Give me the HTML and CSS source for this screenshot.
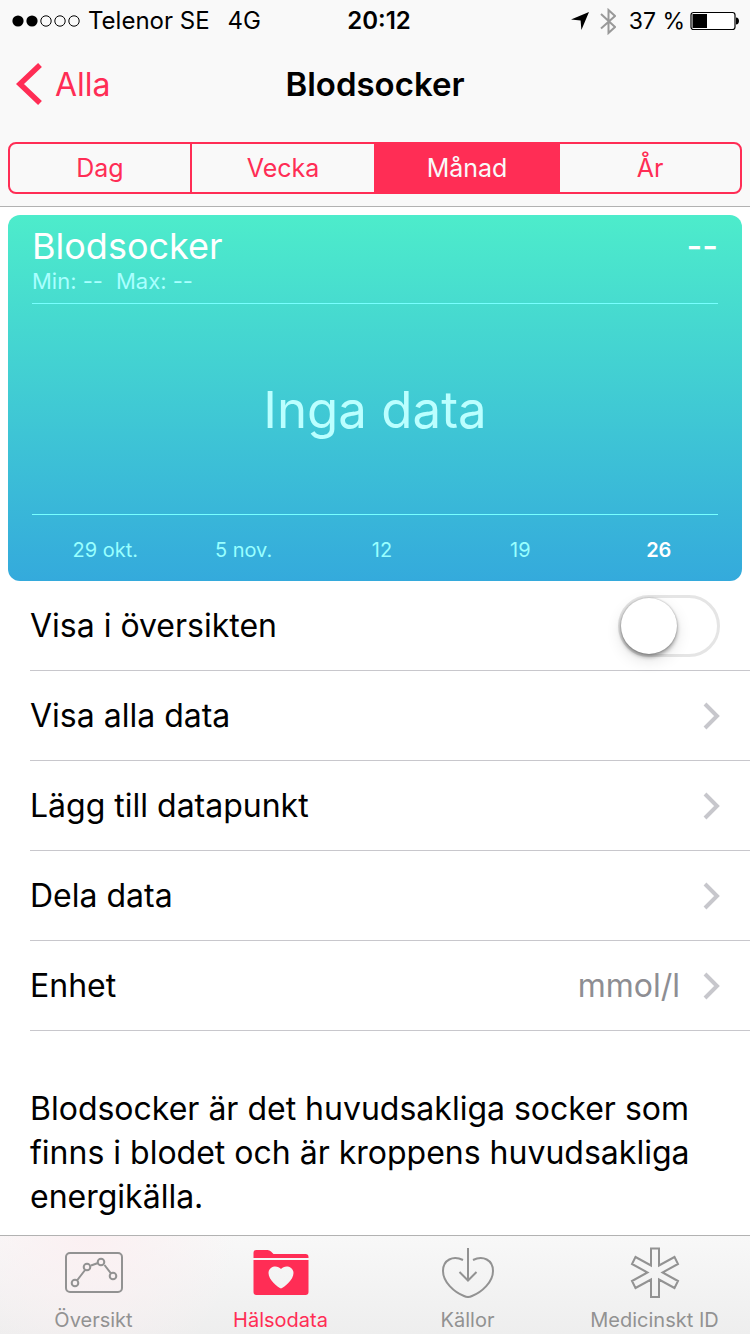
FILE: index.html
```html
<!DOCTYPE html>
<html lang="sv">
<head>
<meta charset="utf-8">
<meta name="viewport" content="width=device-width, initial-scale=1">
<title>Blodsocker</title>
<link rel="stylesheet" href="styles.css">
</head>
<body>
<div class="screen">
  <header class="header">
    <div class="status">
      <div class="status-left">
        <svg class="signal" width="68" height="12" viewBox="0 0 68 12" aria-hidden="true">
          <circle cx="6" cy="6" r="5.6"/><circle cx="20" cy="6" r="5.6"/>
          <g fill="none" stroke="#000" stroke-width="1"><circle cx="34" cy="6" r="5.2"/><circle cx="48" cy="6" r="5.2"/><circle cx="62" cy="6" r="5.2"/></g>
        </svg>
        <span>Telenor SE</span>
        <span class="network">4G</span>
      </div>
      <div class="status-time">20:12</div>
      <div class="status-right">
        <svg width="18" height="18" viewBox="0 0 18 18" aria-hidden="true"><path d="M18 0 10.4 18 9.6 8.6 0 7.6Z"/></svg>
        <svg class="bluetooth" width="16" height="27" viewBox="0 0 16 27" aria-hidden="true"><path d="M1 6 15 19 8.5 25V2L15 8 1 20.500" fill="none" stroke="#999" stroke-width="2"/></svg>
        <span class="percent">37 %</span>
        <svg width="50" height="20" viewBox="0 0 50 20" aria-hidden="true"><rect x="1" y="1.500" width="44" height="17" rx="2.500" fill="#fff" stroke="#000" stroke-width="1.200"/><path d="M2.500 3H17V17H2.500ZM46 6.500C50 6.500 50 13.500 46 13.500Z"/></svg>
      </div>
    </div>
    <nav class="navbar">
      <a class="back" href="#"><svg width="27" height="42" viewBox="0 0 27 42" aria-hidden="true"><path d="M24 2 4 21 24 40" fill="none" stroke="#ff2d55" stroke-width="5.500"/></svg>Alla</a>
      <h1 class="title">Blodsocker</h1>
    </nav>
    <div class="segments">
      <button class="segment" type="button">Dag</button>
      <button class="segment" type="button">Vecka</button>
      <button class="segment segment-active" type="button" aria-pressed="true">Månad</button>
      <button class="segment" type="button">År</button>
    </div>
  </header>

  <main class="content">
    <section class="card">
      <div class="card-head">
        <h2 class="card-title">Blodsocker</h2>
        <span class="card-value">--</span>
      </div>
      <div class="card-range"><span>Min: --</span><span>Max: --</span></div>
      <div class="chart">Inga data</div>
      <div class="axis"><span>29 okt.</span><span>5 nov.</span><span>12</span><span>19</span><span class="today">26</span></div>
    </section>

    <div class="list">
      <label class="row"><span>Visa i översikten</span><input class="switch" type="checkbox" role="switch"></label>
      <a class="row" href="#"><span>Visa alla data</span><svg class="chevron" width="18" height="28" viewBox="0 0 18 28" aria-hidden="true"><path d="M3 2 15 14 3 26"/></svg></a>
      <a class="row" href="#"><span>Lägg till datapunkt</span><svg class="chevron" width="18" height="28" viewBox="0 0 18 28" aria-hidden="true"><path d="M3 2 15 14 3 26"/></svg></a>
      <a class="row" href="#"><span>Dela data</span><svg class="chevron" width="18" height="28" viewBox="0 0 18 28" aria-hidden="true"><path d="M3 2 15 14 3 26"/></svg></a>
      <a class="row" href="#"><span>Enhet</span><span class="row-value">mmol/l</span><svg class="chevron" width="18" height="28" viewBox="0 0 18 28" aria-hidden="true"><path d="M3 2 15 14 3 26"/></svg></a>
    </div>

    <p class="about">Blodsocker är det huvudsakliga socker som finns i blodet och är kroppens huvudsakliga energikälla.</p>
  </main>

  <nav class="tabs">
    <a class="tab" href="#">
      <svg width="60" height="52" viewBox="0 0 60 52" aria-hidden="true"><g fill="none" stroke="#929292" stroke-width="2"><rect x="2" y="7" width="56" height="39" rx="4"/><path d="M13 34.500 21.500 23.500M27 19.500 34 17M40.500 19 47 27.500"/><circle cx="11" cy="37" r="3.300"/><circle cx="23" cy="21" r="3.300"/><circle cx="37" cy="16" r="3.300"/><circle cx="49" cy="30" r="3.300"/></g></svg>
      <span>Översikt</span>
    </a>
    <a class="tab tab-active" href="#" aria-current="page">
      <svg width="60" height="52" viewBox="0 0 60 52" aria-hidden="true"><g fill="#ff2d55"><path d="M2.500 12V7Q2.500 4 5.500 4H16.500Q18.500 4 20 5.500L22.500 8H54.500Q57.500 8 57.500 11V12Z"/><path fill-rule="evenodd" d="M2.500 14H57.500V46Q57.500 49 54.500 49H5.500Q2.500 49 2.500 46ZM30 42.500C33.500 41 42.500 34 42.500 27C42.500 20 33.500 18.500 30 23C26.500 18.500 17.500 20 17.500 27C17.500 34 26.500 41 30 42.500Z"/></g></svg>
      <span>Hälsodata</span>
    </a>
    <a class="tab" href="#">
      <svg width="60" height="52" viewBox="0 0 60 52" aria-hidden="true"><path d="M30 2V34M21.500 26 30 34.500 38.500 26M25 14C15 9 5 14 5 25C5 36 16 46 26 50Q30 52 34 50C44 46 55 36 55 25C55 14 45 9 35 14" fill="none" stroke="#929292" stroke-width="2"/></svg>
      <span>Källor</span>
    </a>
    <a class="tab" href="#">
      <svg width="60" height="52" viewBox="0 0 60 52" aria-hidden="true"><path d="M26 2.500H34V19.500L49.500 11 53 18 37.500 26.500 53 35 49.500 42 34 33.500V51H26V33.500L10.500 42 7 35 22.500 26.500 7 18 10.500 11 26 19.500Z" fill="none" stroke="#929292" stroke-width="2"/></svg>
      <span>Medicinskt ID</span>
    </a>
  </nav>
</div>
</body>
</html>
```
FILE: styles.css
```css
* { box-sizing: border-box; }
body {
  margin: 0;
  background: #fff;
  color: #000;
  font-family: Inter, "Liberation Sans", sans-serif;
  font-size: 32px;
}
a { color: inherit; text-decoration: none; }
h1, h2, p { margin: 0; font-weight: 400; }
svg { display: block; flex: none; }

.screen { min-height: 100vh; display: flex; flex-direction: column; }

.header { background: #f9f9f9; border-bottom: 1px solid #b2b2b2; padding-bottom: 12px; }
.status {
  height: 42px;
  padding: 0 10px 0 12px;
  display: grid;
  grid-template-columns: 1fr auto 1fr;
  align-items: center;
  font-size: 24px;
  line-height: 42px;
}
.status-left, .status-right { display: flex; align-items: center; }
.status-left { gap: 8px; }
.status-right { justify-content: flex-end; gap: 5px; }
.network { margin-left: 10px; }
.status-time { padding-left: 6px; font-weight: 600; }
.bluetooth { margin: 0 8px 0 6px; }
.percent { font-size: 23px; }

.navbar {
  height: 84px;
  margin-bottom: 16px;
  padding: 0 16px;
  display: grid;
  grid-template-columns: 1fr auto 1fr;
  align-items: center;
}
.back { display: flex; align-items: center; gap: 12px; color: #ff2d55; }
.title { font-size: 33px; font-weight: 600; }

.segments {
  margin: 0 8px;
  height: 52px;
  display: grid;
  grid-template-columns: 180fr 184fr 184fr 182fr;
  border: 2px solid #ff2d55;
  border-radius: 8px;
  overflow: hidden;
}
.segment {
  border: 0;
  padding: 0;
  background: none;
  color: #ff2d55;
  font: inherit;
  font-size: 25px;
}
.segment + .segment { border-left: 2px solid #ff2d55; }
.segment-active { background: #ff2d55; color: #f9f9f9; }

.content { flex: 1; padding-top: 8px; }
.card {
  margin: 0 8px;
  padding: 8px 24px 0;
  border-radius: 12px;
  background: linear-gradient(#4deccb, #34aadc);
  color: #9ff;
}
.card-head { display: flex; justify-content: space-between; align-items: center; height: 46px; color: #fff; }
.card-title { font-size: 36px; }
.card-value { font-size: 34px; font-weight: 500; line-height: 48px; }
.card-range { display: flex; gap: 13px; height: 34px; font-size: 22px; line-height: 24px; color: #aff; }
.chart {
  height: 212px;
  display: grid;
  place-items: center;
  border-top: 1px solid #7ff;
  border-bottom: 1px solid #7ff;
  font-size: 51px;
  color: #bff;
}
.axis {
  height: 66px;
  margin: 0 -10px 0 4px;
  display: grid;
  grid-template-columns: repeat(5, 1fr);
  text-align: center;
  font-size: 20px;
  line-height: 70px;
}
.today { color: #fff; font-weight: 600; }

.list { padding-left: 30px; }
.row {
  height: 90px;
  padding-right: 30px;
  display: flex;
  align-items: center;
  border-bottom: 1px solid #c8c7cc;
}
.row > :first-child { flex: 1; }
.row-value { color: #8e8e93; margin-right: 22px; }
.chevron { fill: none; stroke: #c7c7cc; stroke-width: 4; }
.switch {
  appearance: none;
  flex: none;
  width: 102px;
  height: 62px;
  margin: 0;
  padding: 0;
  border: 3px solid #e5e5e5;
  border-radius: 31px;
  background: #fff;
}
.switch::before {
  content: "";
  display: block;
  width: 56px;
  height: 56px;
  border-radius: 50%;
  background: #fff;
  box-shadow: 0 3px 4px rgba(0, 0, 0, .35), 0 0 2px rgba(0, 0, 0, .3), 0 6px 16px rgba(0, 0, 0, .12);
}
.switch:checked { background: #4cd964; border-color: #4cd964; }
.switch:checked::before { margin-left: 40px; }

.about { padding: 56px 30px 16px; line-height: 44px; }

.tabs {
  height: 99px;
  padding: 10px 2px 0 0;
  display: grid;
  grid-template-columns: repeat(4, 1fr);
  border-top: 1px solid #b2b2b2;
  background: radial-gradient(circle at 12% 0, #fbf0f2, rgba(251, 240, 242, 0) 22%), linear-gradient(#f8f8f8, #eee);
  color: #929292;
  font-size: 20px;
}
.tab { display: flex; flex-direction: column; align-items: center; gap: 9px; line-height: 26px; white-space: nowrap; }
.tab-active { color: #ff2d55; }
```
